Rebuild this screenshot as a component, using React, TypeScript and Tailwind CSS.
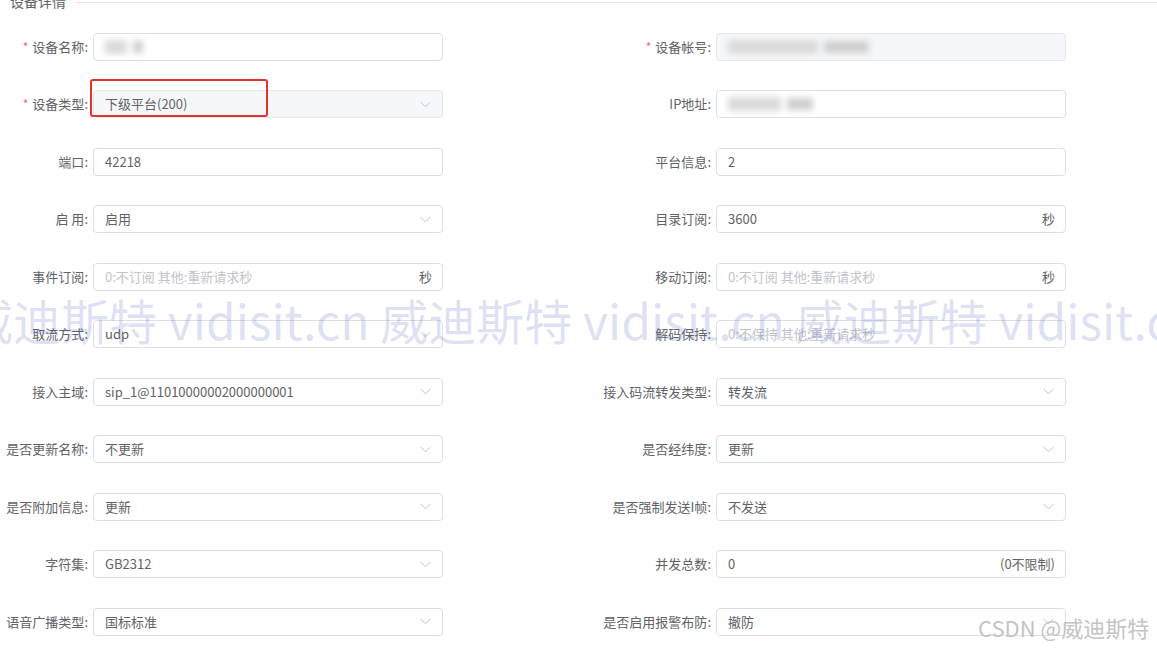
const font = { fontFamily: '"Noto Sans CJK SC", "Liberation Sans", sans-serif' }

type Field = {
  label: string
  required?: boolean
  kind: "input" | "select"
  value?: string
  placeholder?: string
  suffix?: string
  disabled?: boolean
  blur?: number
  highlight?: boolean
}

const rows: [Field, Field][] = [
  [
    { label: "设备名称", required: true, kind: "input", blur: 36 },
    { label: "设备帐号", required: true, kind: "input", disabled: true, blur: 150 },
  ],
  [
    { label: "设备类型", required: true, kind: "select", value: "下级平台(200)", disabled: true, highlight: true },
    { label: "IP地址", kind: "input", blur: 88 },
  ],
  [
    { label: "端口", kind: "input", value: "42218" },
    { label: "平台信息", kind: "input", value: "2" },
  ],
  [
    { label: "启 用", kind: "select", value: "启用" },
    { label: "目录订阅", kind: "input", value: "3600", suffix: "秒" },
  ],
  [
    { label: "事件订阅", kind: "input", placeholder: "0:不订阅 其他:重新请求秒", suffix: "秒" },
    { label: "移动订阅", kind: "input", placeholder: "0:不订阅 其他:重新请求秒", suffix: "秒" },
  ],
  [
    { label: "取流方式", kind: "select", value: "udp" },
    { label: "解码保持", kind: "input", placeholder: "0:不保持 其他:重新请求秒" },
  ],
  [
    { label: "接入主域", kind: "select", value: "sip_1@11010000002000000001" },
    { label: "接入码流转发类型", kind: "select", value: "转发流" },
  ],
  [
    { label: "是否更新名称", kind: "select", value: "不更新" },
    { label: "是否经纬度", kind: "select", value: "更新" },
  ],
  [
    { label: "是否附加信息", kind: "select", value: "更新" },
    { label: "是否强制发送I帧", kind: "select", value: "不发送" },
  ],
  [
    { label: "字符集", kind: "select", value: "GB2312" },
    { label: "并发总数", kind: "input", value: "0", suffix: "(0不限制)" },
  ],
  [
    { label: "语音广播类型", kind: "select", value: "国标标准" },
    { label: "是否启用报警布防", kind: "select", value: "撤防" },
  ],
]

function Chevron() {
  return (
    <svg width="11" height="7" viewBox="0 0 11 7" fill="none" className="shrink-0 mr-[1px]">
      <path d="M0.5 0.8 L5.5 5.8 L10.5 0.8" stroke="#c0c4cc" strokeWidth="1" />
    </svg>
  )
}

function FormItem({ f }: { f: Field }) {
  return (
    <div className="flex items-center h-[28px]">
      <div className="w-[88px] flex justify-end shrink-0">
        <span className="whitespace-nowrap text-[13px] text-[#606266] flex items-center">
          {f.required && <span className="text-[#f56c6c] mr-[4px] text-[12px]">*</span>}
          {f.label}:
        </span>
      </div>
      <div className="relative ml-[5px]">
        <div
          className={`w-[350px] h-[28px] rounded-[4px] border flex items-center pl-[11px] pr-[10px] text-[13px] ${
            f.disabled ? "bg-[#f5f7fa] border-[#e4e7ed]" : "bg-white border-[#dcdfe6]"
          }`}
        >
          <div className="flex-1 min-w-0 whitespace-nowrap">
            {f.blur ? (
              <div className="flex items-center gap-[6px]">
                <div className="h-[14px] bg-[#dadada] blur-[3px]" style={{ width: f.blur * 0.6 }} />
                <div className="h-[12px] bg-[#cfcfcf] blur-[3px]" style={{ width: f.blur * 0.3 }} />
              </div>
            ) : f.value ? (
              <span className="text-[#606266]">{f.value}</span>
            ) : (
              <span className="text-[#c0c4cc]">{f.placeholder}</span>
            )}
          </div>
          {f.kind === "select" && <Chevron />}
          {f.suffix && <span className="text-[#606266] text-[13px]">{f.suffix}</span>}
        </div>
        {f.highlight && (
          <div className="absolute left-[-3px] top-[-11px] w-[178px] h-[38px] border-2 border-[#e5322d] rounded-[3px] pointer-events-none" />
        )}
      </div>
    </div>
  )
}

export default function App() {
  return (
    <div className="relative w-[1157px] h-[648px] overflow-hidden bg-white" style={font}>
      {/* HEADER */}
      <div className="flex items-center mt-[-9px] pl-[10px]">
        <span className="text-[14px] text-[#606266]">设备详情</span>
        <div className="flex-1 h-px bg-[#e4e7ed] ml-[10px] mt-[1px]" />
      </div>

      {/* FORM */}
      <div className="grid grid-cols-[623px_1fr] gap-y-[29.5px] pt-[20.5px]">
        {rows.map((r, i) => (
          <>
            <FormItem key={`l${i}`} f={r[0]} />
            <FormItem key={`r${i}`} f={r[1]} />
          </>
        ))}
      </div>

      {/* Watermark */}
      <div className="absolute left-[-35px] top-[295px] whitespace-nowrap text-[48px] leading-none text-[#5060c0]/20 pointer-events-none">
        威迪斯特 vidisit.cn 威迪斯特 vidisit.cn 威迪斯特 vidisit.cn
      </div>
      <div className="absolute left-[978px] top-[611px] whitespace-nowrap text-[22px] text-[#c4c4c4] pointer-events-none">
        CSDN @威迪斯特
      </div>
    </div>
  )
}
